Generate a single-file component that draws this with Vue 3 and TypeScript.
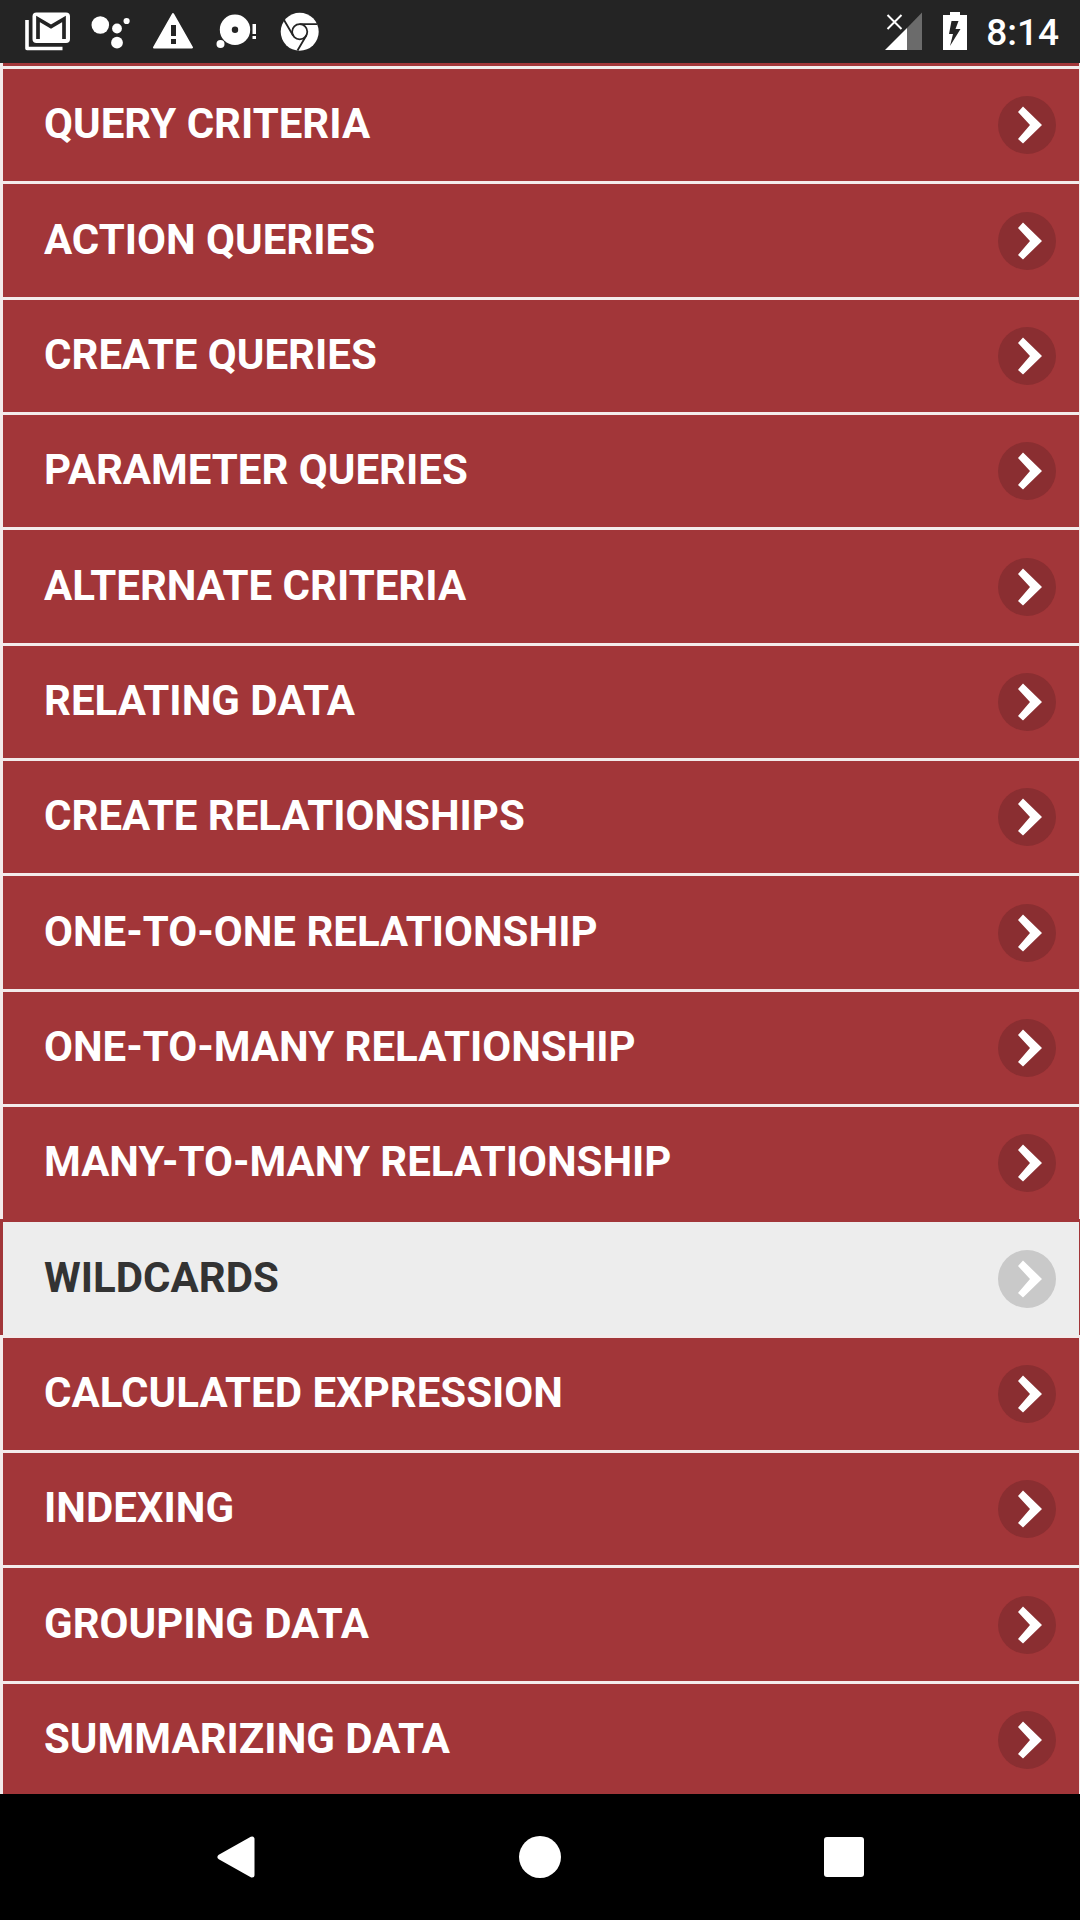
<script setup lang="ts">
import { ref } from 'vue'

const topics: string[] = [
  'QUERY CRITERIA',
  'ACTION QUERIES',
  'CREATE QUERIES',
  'PARAMETER QUERIES',
  'ALTERNATE CRITERIA',
  'RELATING DATA',
  'CREATE RELATIONSHIPS',
  'ONE-TO-ONE RELATIONSHIP',
  'ONE-TO-MANY RELATIONSHIP',
  'MANY-TO-MANY RELATIONSHIP',
  'WILDCARDS',
  'CALCULATED EXPRESSION',
  'INDEXING',
  'GROUPING DATA',
  'SUMMARIZING DATA',
]

const selected = ref('WILDCARDS')
</script>

<template>
  <div class="screen">
    <header class="status">
      <div class="notifications">
        <svg class="notice" viewBox="0 0 63 63" aria-hidden="true">
          <path d="M11 20V48.500H46.500" fill="none" stroke="#fff" stroke-width="3.600" stroke-linejoin="round" />
          <rect x="16.500" y="12.500" width="37.500" height="30.500" rx="4" fill="#fff" />
          <path d="M22 39V19L35 26.500L48 19V39" fill="none" stroke="#242424" stroke-width="3.700" />
        </svg>
        <svg class="notice" viewBox="0 0 63 63" aria-hidden="true">
          <g fill="#fff">
            <circle cx="21.300" cy="25" r="8.800" />
            <circle cx="38" cy="28.500" r="4.900" />
            <circle cx="47.600" cy="21" r="3.100" />
            <circle cx="38" cy="42.700" r="5.900" />
          </g>
        </svg>
        <svg class="notice" viewBox="0 0 63 63" aria-hidden="true">
          <path d="M31 14L50 47.500H12Z" fill="#fff" stroke="#fff" stroke-width="2" stroke-linejoin="round" />
          <path d="M29 25h5v11h-5zM29 39h5v5h-5z" fill="#242424" />
        </svg>
        <svg class="notice" viewBox="0 0 63 63" aria-hidden="true">
          <g fill="#fff">
            <circle cx="30" cy="29.700" r="15.200" />
            <circle cx="15.500" cy="44" r="4" />
            <path d="M47.500 24h3.500v10h-3.500zM47.500 36h3.500v3h-3.500z" />
          </g>
          <circle cx="30" cy="29.700" r="3.200" fill="#242424" />
        </svg>
        <svg class="notice" viewBox="0 0 63 63" aria-hidden="true">
          <circle cx="31.700" cy="31.700" r="19" fill="#fff" />
          <g fill="none" stroke="#242424" stroke-width="1.800">
            <circle cx="31.700" cy="31.700" r="7.600" />
            <path d="M31.700 24.100H49.500M25.100 35.500L16 20M38.300 35.500L29.500 50.500" />
          </g>
        </svg>
      </div>
      <div class="system">
        <svg class="signal" viewBox="0 0 37 63" aria-hidden="true">
          <path d="M0 50L22 28V50Z" fill="#fff" />
          <path d="M22 28L37 12.500V50H22Z" fill="#6b6b6b" />
          <path d="M2.500 15L16.500 29M16.500 15L2.500 29" stroke="#fff" stroke-width="2" />
        </svg>
        <svg class="battery" viewBox="0 0 24 63" aria-hidden="true">
          <path d="M0 15H7V12H17V15H24V50H0Z" fill="#fff" />
          <path d="M8.500 21H15.500L12.500 29H17.500L7 46L10 34H6Z" fill="#242424" />
        </svg>
        <time class="clock">8:14</time>
      </div>
    </header>

    <main class="content">
      <div class="previous"></div>
      <ul class="topics">
        <li v-for="topic in topics" :key="topic">
          <a href="#" :class="{ active: topic === selected }" @click.prevent="selected = topic">
            <span>{{ topic }}</span>
            <svg class="arrow" viewBox="0 0 58 58" aria-hidden="true">
              <circle class="disc" cx="29" cy="29" r="29" />
              <path d="M25 10.500L20 16L32 29L20 43L25 47.500L44 29Z" fill="#fff" />
            </svg>
          </a>
        </li>
      </ul>
    </main>

    <nav class="navbar">
      <button type="button" aria-label="Back">
        <svg viewBox="0 0 42 42" aria-hidden="true">
          <path d="M5 21L37 3V39Z" fill="#fff" stroke="#fff" stroke-width="5" stroke-linejoin="round" />
        </svg>
      </button>
      <button type="button" aria-label="Home">
        <svg viewBox="0 0 42 42" aria-hidden="true"><circle cx="21" cy="21" r="21" fill="#fff" /></svg>
      </button>
      <button type="button" aria-label="Overview">
        <svg viewBox="0 0 42 42" aria-hidden="true"><rect x="1" y="1" width="40" height="40" rx="3" fill="#fff" /></svg>
      </button>
    </nav>
  </div>
</template>

<style>
body {
  background: #000;
}
</style>

<style scoped>
.screen {
  display: flex;
  flex-direction: column;
  height: 100vh;
  overflow: hidden;
  font-family: Roboto, "Liberation Sans", sans-serif;
}

.status {
  flex: none;
  display: flex;
  justify-content: space-between;
  height: 63px;
  padding: 0 21px 0 16px;
  background: #242424;
  color: #fff;
}

.notifications,
.system {
  display: flex;
}

.notice {
  width: 63px;
  height: 63px;
}

.signal {
  width: 37px;
  height: 63px;
  margin-right: 21px;
}

.battery {
  width: 24px;
  height: 63px;
  margin-right: 19px;
}

.clock {
  font-size: 37px;
  font-weight: 500;
  line-height: 66px;
}

.content {
  flex: 1;
  min-height: 0;
  overflow: hidden;
}

.previous {
  height: 3px;
  background: #a23639;
  border-left: 3px solid #f3ebeb;
  border-right: 1px solid #f3ebeb;
}

.topics {
  margin: 0;
  padding: 0;
  list-style: none;
}

.topics li {
  height: 115px;
}

.topics li:nth-child(3n + 2) {
  height: 116px;
}

.topics a {
  box-sizing: border-box;
  display: flex;
  align-items: center;
  justify-content: space-between;
  height: 100%;
  padding: 0 23px 0 41px;
  border: solid #f3ebeb;
  border-width: 3px 1px 0 3px;
  background: #a23639;
  color: #fff;
  font-size: 42px;
  font-weight: 700;
  line-height: 54px;
  text-decoration: none;
}

.topics span {
  padding-bottom: 2px;
}

.topics a.active {
  border-color: #a23639;
  background: #ededed;
  color: #333;
}

.arrow {
  flex: none;
  width: 58px;
  height: 58px;
}

.disc {
  fill: #8a2e31;
}

.active .disc {
  fill: #c9c9c9;
}

.navbar {
  flex: none;
  display: flex;
  height: 126px;
  padding: 0 84px;
  background: #000;
}

.navbar button {
  flex: 1;
  display: flex;
  align-items: center;
  justify-content: center;
  padding: 0;
  border: 0;
  background: none;
}

.navbar svg {
  width: 42px;
  height: 42px;
}
</style>
